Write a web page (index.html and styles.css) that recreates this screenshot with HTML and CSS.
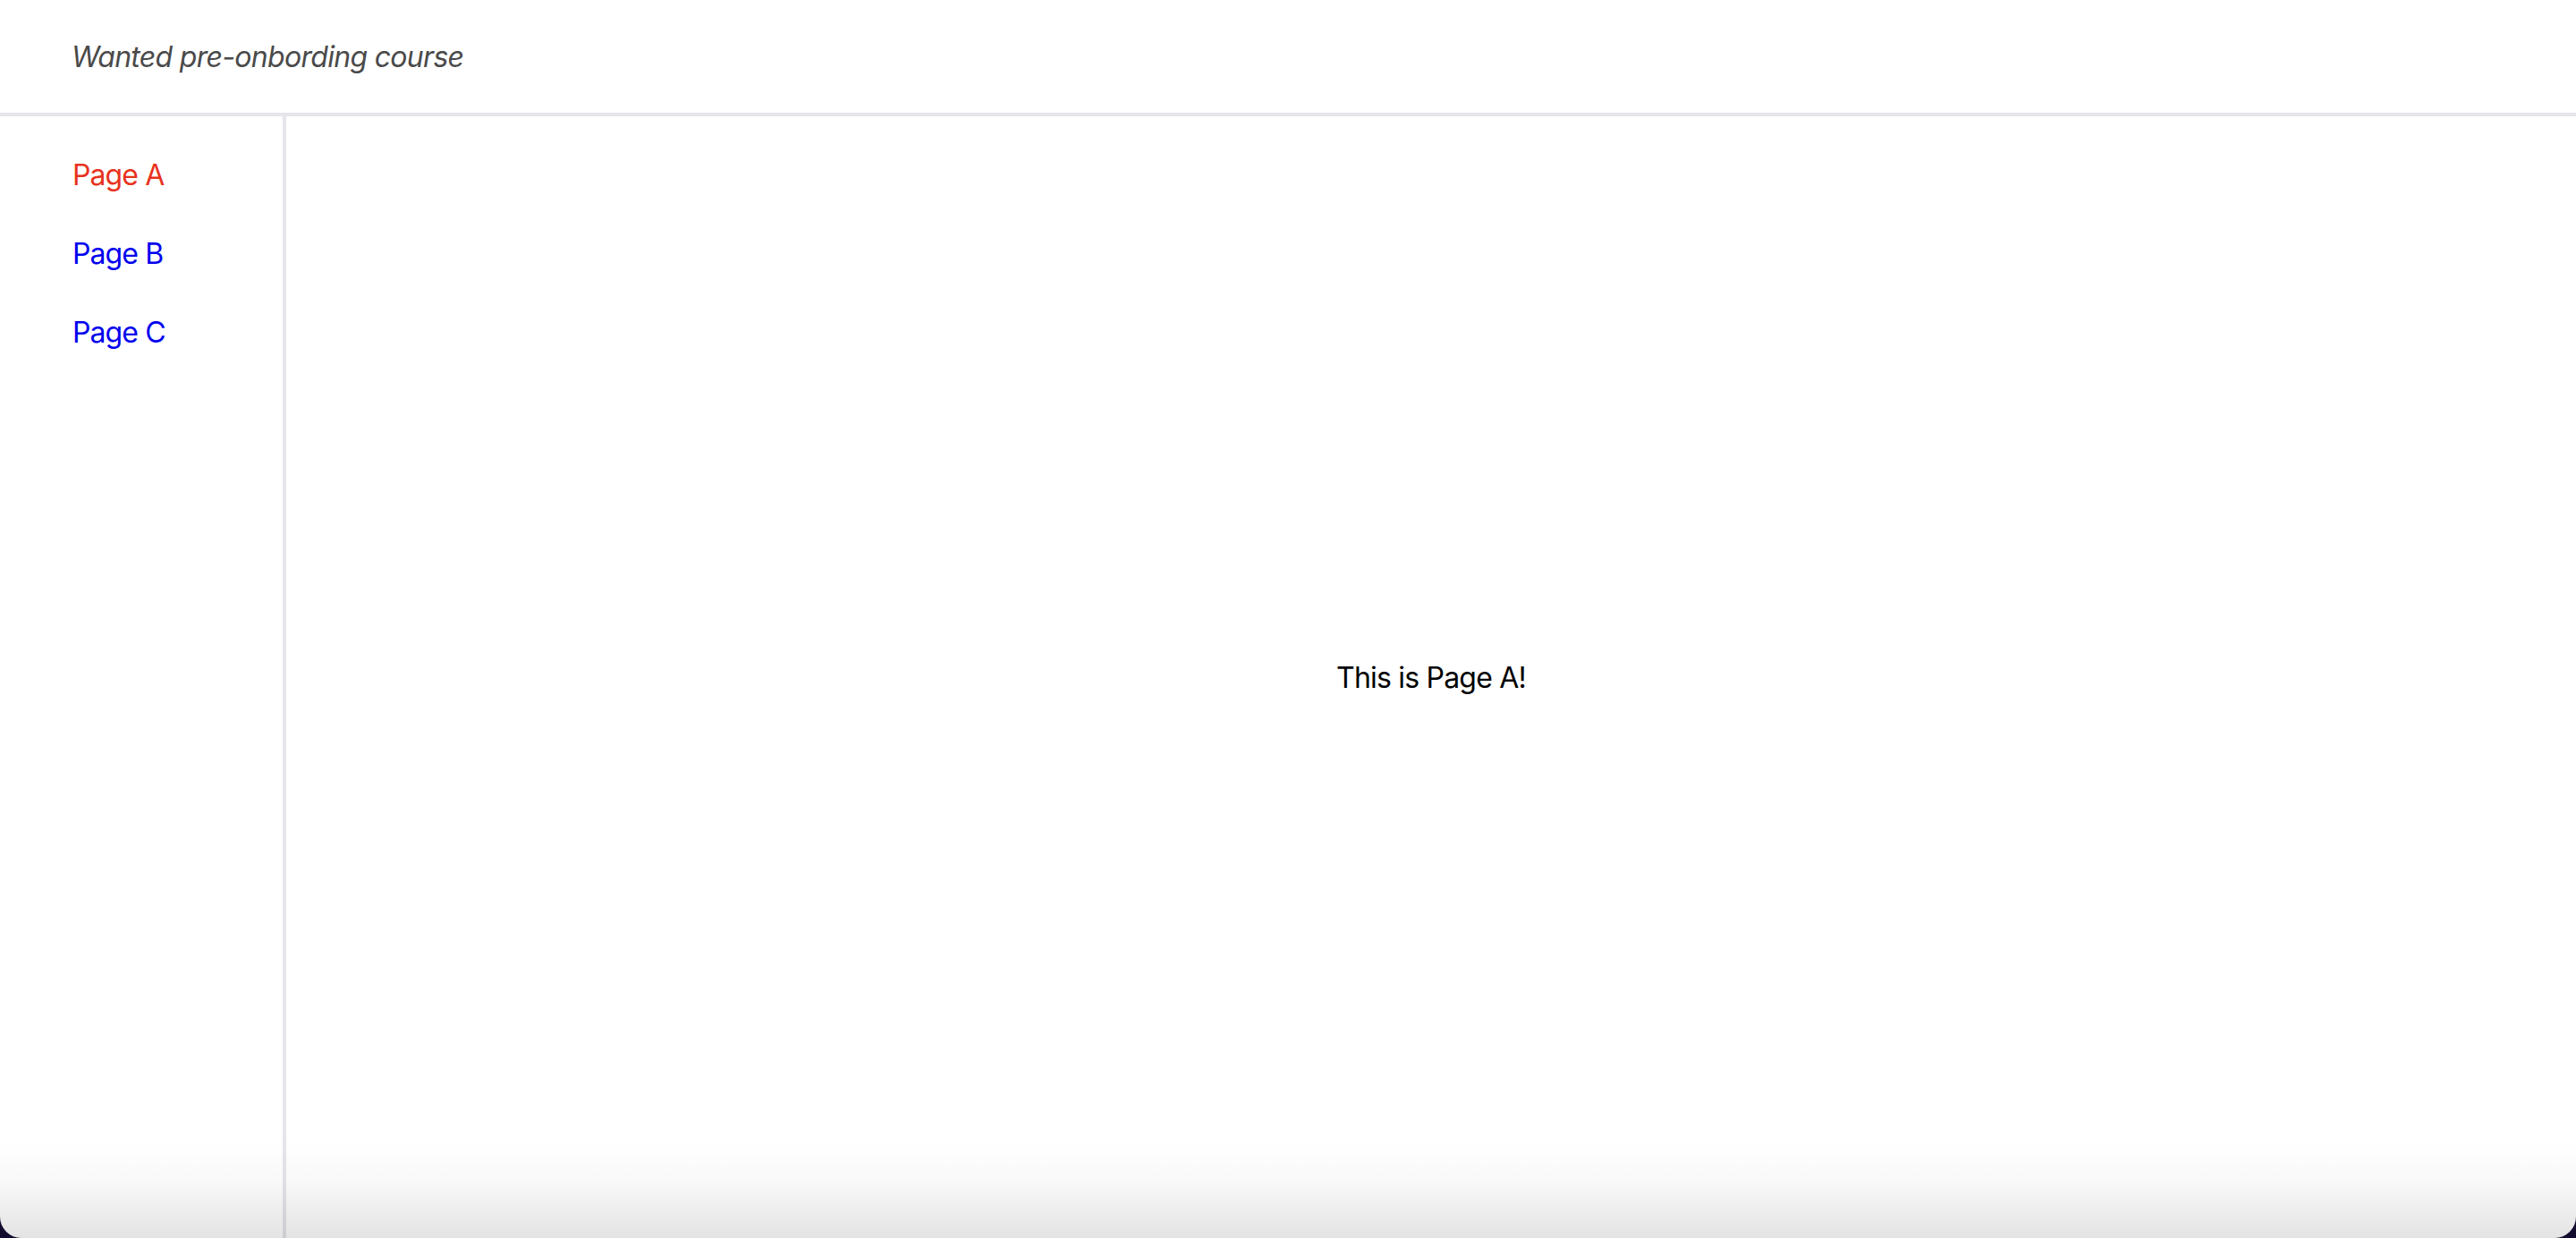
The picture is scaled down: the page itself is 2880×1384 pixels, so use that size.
FILE: index.html
```html
<!DOCTYPE html>
<html lang="en">
<head>
<meta charset="utf-8">
<title>Wanted pre-onbording course</title>
<link rel="stylesheet" href="styles.css">
</head>
<body>
<div class="window">
  <header class="header">
    <span class="title">Wanted pre-onbording course</span>
  </header>
  <div class="layout">
    <nav class="sidebar">
      <a class="link active" href="#a">Page A</a>
      <a class="link" href="#b">Page B</a>
      <a class="link" href="#c">Page C</a>
    </nav>
    <main class="content">
      <p class="message">This is Page A!</p>
    </main>
  </div>
</div>
</body>
</html>
```
FILE: styles.css
```css
html, body {
  margin: 0;
  padding: 0;
  height: 100%;
  background: #140c2e;
}
body {
  font-family: Inter, "Noto Sans", "Liberation Sans", sans-serif;
  overflow: hidden;
}
.window {
  position: relative;
  height: 1384px;
  background: #ffffff;
  border-radius: 0 0 24px 24px;
  overflow: hidden;
  display: flex;
  flex-direction: column;
}
.window::after {
  content: "";
  position: absolute;
  left: 0;
  right: 0;
  bottom: 0;
  height: 110px;
  background: linear-gradient(to bottom, rgba(0,0,0,0) 0%, rgba(0,0,0,0.025) 40%, rgba(0,0,0,0.11) 100%);
  pointer-events: none;
}
.header {
  height: 126px;
  flex: none;
  border-bottom: 4px solid #e5e5ea;
  display: flex;
  align-items: center;
  padding-left: 80px;
  box-sizing: content-box;
}
.title {
  font-style: italic;
  font-size: 32px;
  color: #4a4a4a;
  letter-spacing: -0.7px;
}
.layout {
  flex: 1;
  display: flex;
}
.sidebar {
  width: 320px;
  flex: none;
  border-right: 4px solid #e5e5ea;
  display: flex;
  flex-direction: column;
  padding-top: 46px;
  padding-left: 81px;
  box-sizing: border-box;
  gap: 48px;
}
.link {
  font-size: 32px;
  line-height: 40px;
  color: #0000ee;
  text-decoration: none;
  letter-spacing: -0.9px;
}
.link.active {
  color: #e8321e;
}
.content {
  flex: 1;
  display: flex;
  align-items: center;
  justify-content: center;
}
.message {
  margin: 0;
  font-size: 32px;
  color: #000000;
  letter-spacing: -0.8px;
}
```
